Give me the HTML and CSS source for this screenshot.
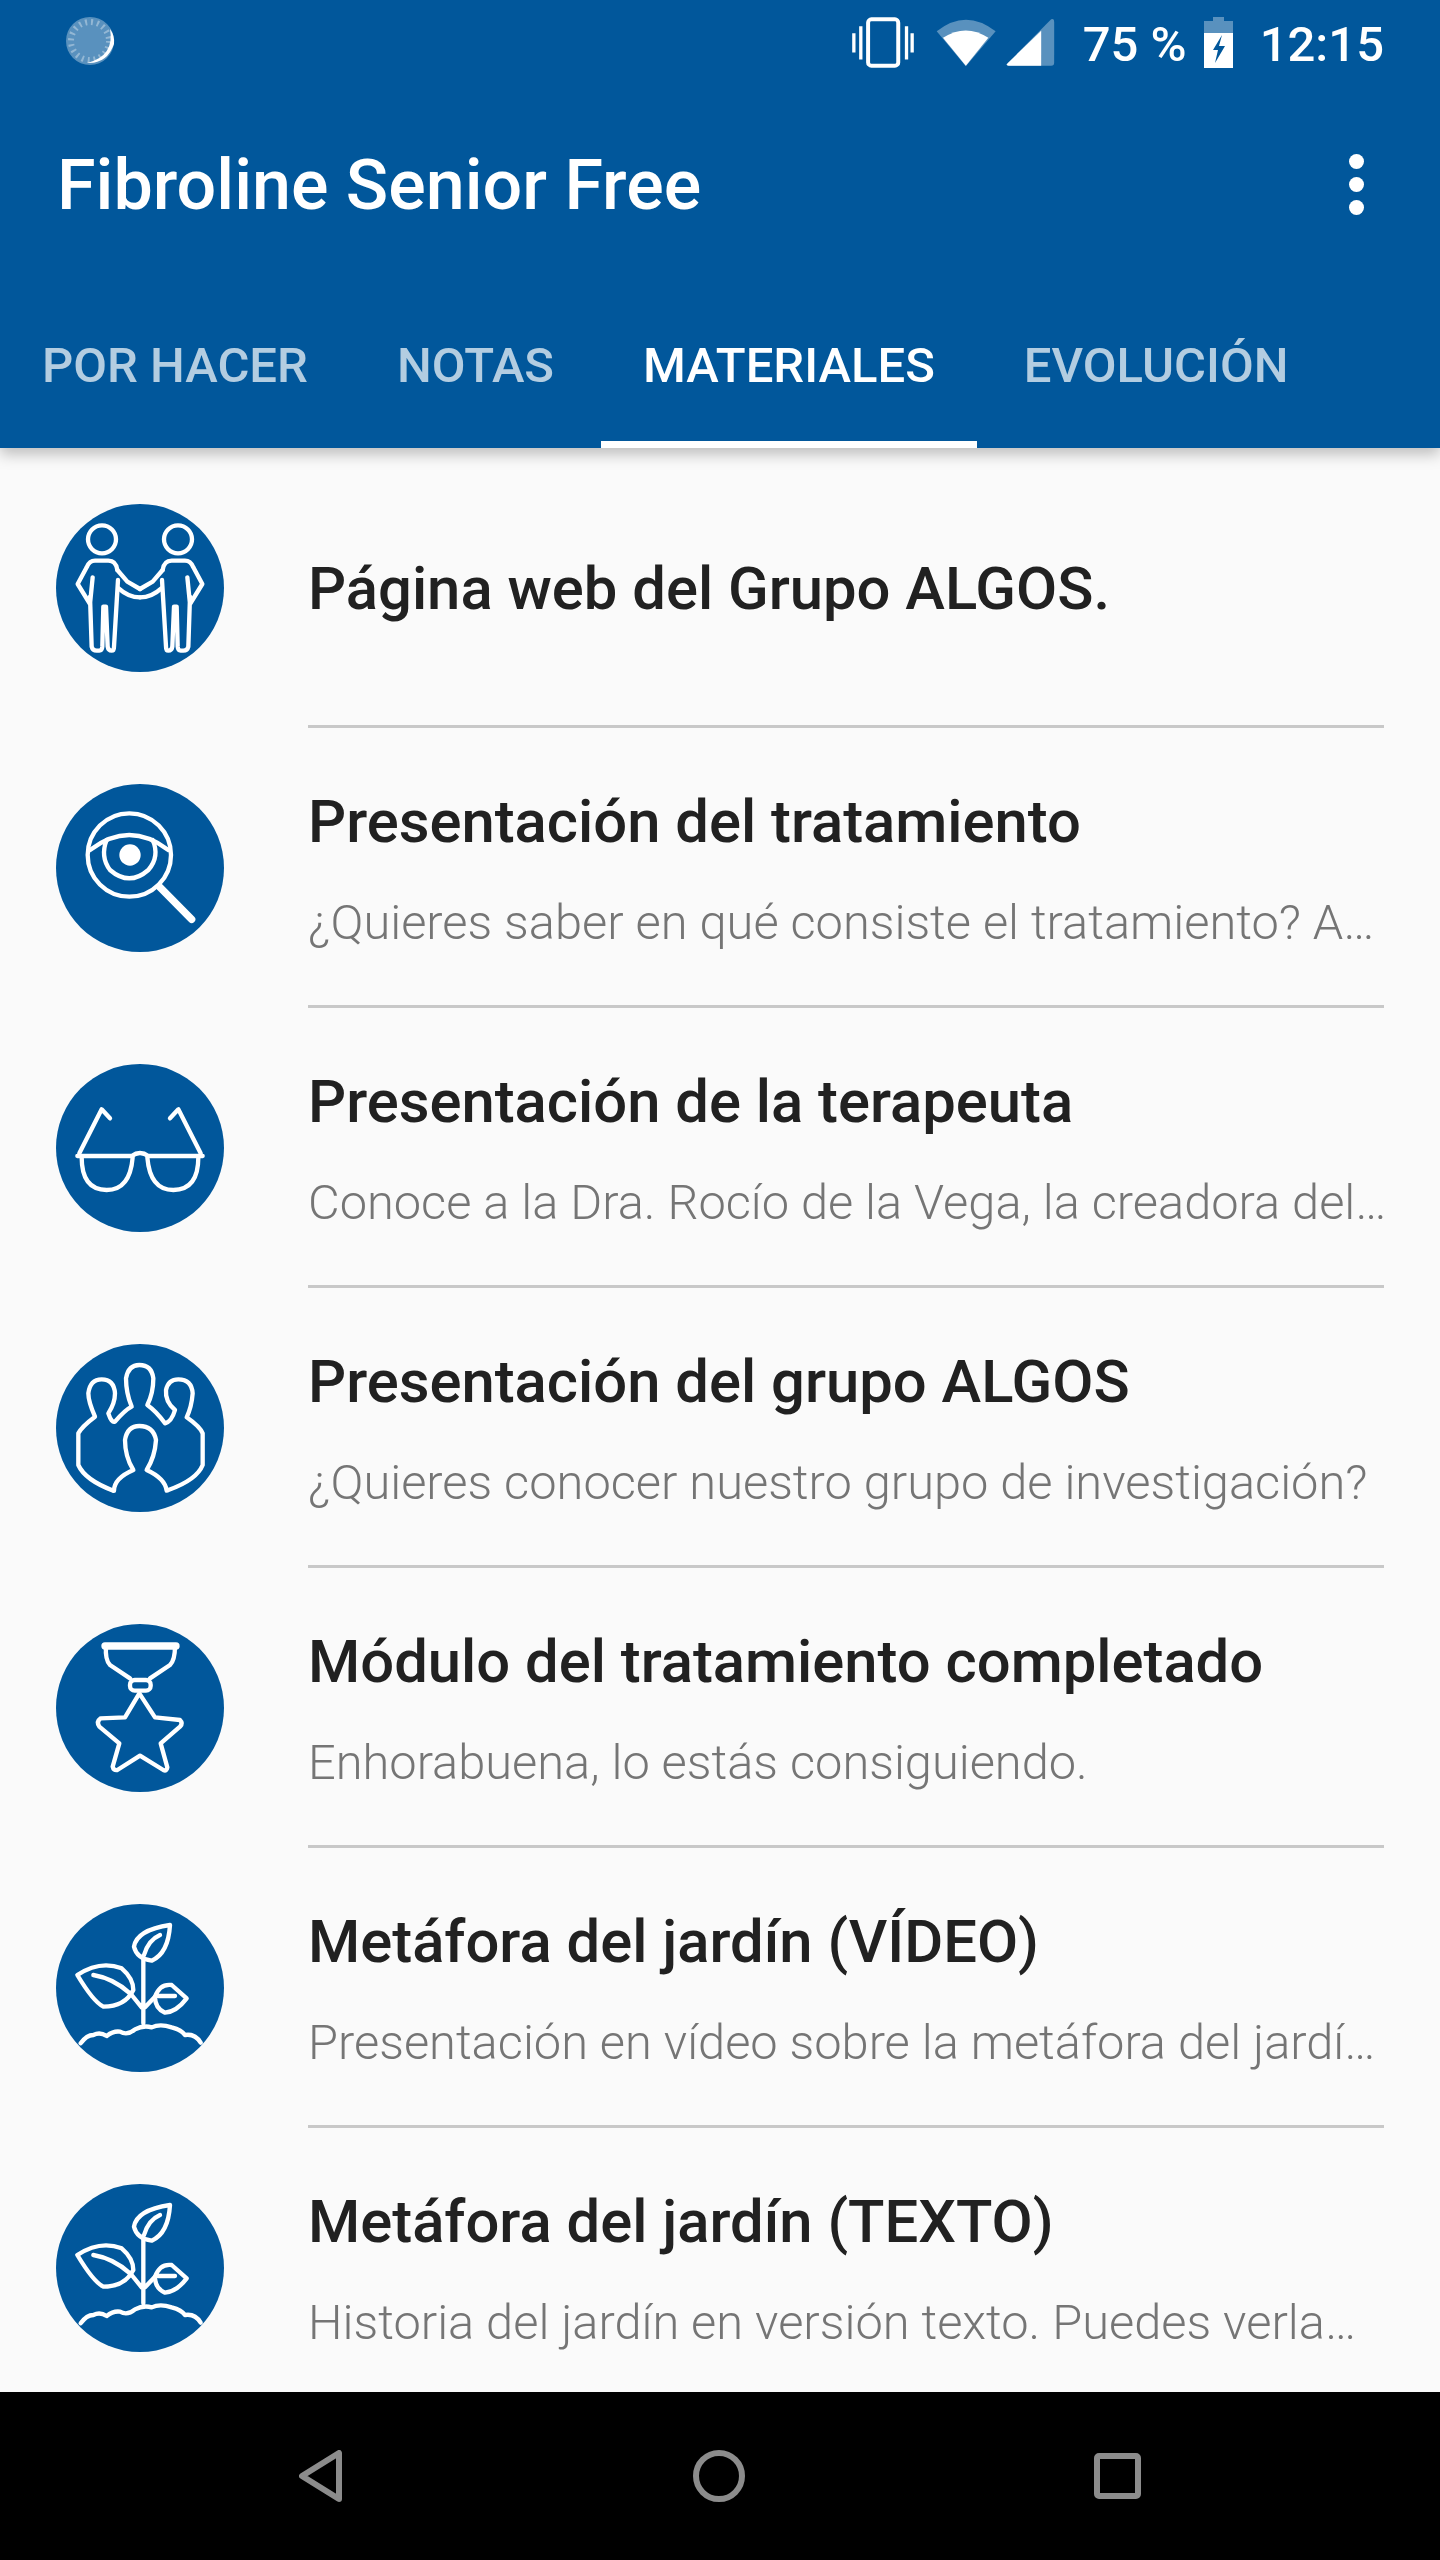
FILE: index.html
```html
<!DOCTYPE html>
<html lang="es">
<head>
    <meta charset="utf-8">
    <title>Fibroline Senior Free</title>
    <link rel="stylesheet" href="styles.css">
</head>
<body>
    <svg class="defs" width="0" height="0">
        <symbol id="plant" viewBox="48 42 504 504">
            <path d="M310 205V400M275 315L305 352M345 320L315 352"/>
            <path d="M390 105Q385 190 335 212Q290 205 282 170Q290 120 390 105ZM312 195Q325 150 360 135"/>
            <path d="M112 255Q180 210 245 235Q280 265 280 300Q255 350 190 350Q160 335 112 255ZM160 255Q220 265 270 310"/>
            <path d="M345 320Q360 280 395 285L440 325Q410 365 375 368Q345 355 345 320ZM355 318H405"/>
            <path d="M122 460Q140 435 160 435Q180 425 200 438Q220 422 240 425Q262 438 285 418Q310 405 335 412Q360 400 395 412Q425 420 435 435Q465 430 482 458"/>
        </symbol>
    </svg>

    <div class="screen">
        <header class="app-header">
            <div class="status-bar">
                <svg class="status-spinner" viewBox="0 0 52 52">
                    <circle cx="25" cy="25" r="24" fill="#fff" opacity="0.35"/>
                    <circle cx="25" cy="25" r="19" fill="none" stroke="#fff" stroke-width="6" stroke-dasharray="2 4" opacity="0.35"/>
                    <path d="M45 13Q50 40 22 47Q42 48 49 28Q50 20 45 13Z" fill="#fff"/>
                </svg>
                <div class="status-right">
                    <svg class="status-vibrate" viewBox="95 45 195 160">
                        <rect x="146" y="55" width="91" height="140" rx="10" fill="none" stroke="#fff" stroke-width="12"/>
                        <path d="M124 76V176M262 76V176M103 97V155M279 97V155" stroke="#fff" stroke-width="10" fill="none"/>
                    </svg>
                    <svg class="status-wifi" viewBox="345 50 185 148">
                        <path d="M349 90Q437 20 527 90L437 196Z" fill="#fff" opacity="0.35"/>
                        <path d="M368 110Q437 65 505 110L437 194Z" fill="#fff"/>
                    </svg>
                    <svg class="status-signal" viewBox="555 58 146 144">
                        <path d="M558 195L690 62Q699 58 699 70V192Q699 201 690 201H562Q553 201 558 195Z" fill="#fff" opacity="0.35"/>
                        <path d="M558 195L660 96V201H562Q553 201 558 195Z" fill="#fff"/>
                    </svg>
                    <span class="status-text status-battery-text">75 %</span>
                    <svg class="status-battery" viewBox="0 0 29 51">
                        <path d="M9 0H20V4H29V16H0V4H9Z" fill="#fff" opacity="0.35"/>
                        <path d="M0 16H29V51H0Z" fill="#fff"/>
                        <path d="M18 18L9 33H14L11 46L21 29H15Z" fill="#01579b"/>
                    </svg>
                    <span class="status-text">12:15</span>
                </div>
            </div>

            <div class="toolbar">
                <h1 class="app-title">Fibroline Senior Free</h1>
                <div class="menu-dots"><span></span><span></span><span></span></div>
            </div>

            <nav class="tabs">
                <a class="tab">POR HACER</a>
                <a class="tab">NOTAS</a>
                <a class="tab active">MATERIALES</a>
                <a class="tab">EVOLUCIÓN</a>
            </nav>
        </header>

        <main class="list">
            <div class="row">
                <svg class="row-icon" viewBox="48 42 504 504">
                    <circle class="disc" cx="300" cy="294" r="252"/>
                    <g id="person">
                        <circle cx="186" cy="148" r="42"/>
                        <path d="M232 240Q228 212 205 212H165Q148 212 140 232L113 282L150 342L158 262M150 320L155 470Q158 482 170 482H178Q186 482 187 470L190 350H198L203 470Q205 482 215 482Q222 482 222 470L234 270"/>
                        <path d="M232 240L262 275L300 297M236 295Q265 322 300 322"/>
                    </g>
                    <use href="#person" transform="matrix(-1 0 0 1 600 0)"/>
                </svg>
                <div class="row-body">
                    <div class="row-title">Página web del Grupo ALGOS.</div>
                </div>
            </div>

            <div class="row">
                <svg class="row-icon" viewBox="48 42 504 504">
                    <circle class="disc" cx="300" cy="294" r="252"/>
                    <circle cx="268" cy="255" r="125"/>
                    <path d="M150 240Q268 150 385 240"/>
                    <path d="M200 210Q180 260 210 300Q268 350 325 300Q360 260 338 210"/>
                    <circle class="solid" cx="270" cy="255" r="32"/>
                    <path class="thick" d="M358 350L455 448"/>
                </svg>
                <div class="row-body">
                    <div class="row-title">Presentación del tratamiento</div>
                    <div class="row-sub">¿Quieres saber en qué consiste el tratamiento? A…</div>
                </div>
            </div>

            <div class="row">
                <svg class="row-icon" viewBox="48 42 504 504">
                    <circle class="disc" cx="300" cy="294" r="252"/>
                    <path d="M112 318H275Q300 300 325 318H488"/>
                    <path d="M118 310L185 178L210 205M482 310L415 178L390 205"/>
                    <path d="M125 322Q125 420 200 420Q270 420 278 322M475 322Q475 420 400 420Q330 420 322 322"/>
                </svg>
                <div class="row-body">
                    <div class="row-title">Presentación de la terapeuta</div>
                    <div class="row-sub">Conoce a la Dra. Rocío de la Vega, la creadora del…</div>
                </div>
            </div>

            <div class="row">
                <svg class="row-icon" viewBox="48 42 504 504">
                    <circle class="disc" cx="300" cy="294" r="252"/>
                    <path d="M220 482Q135 450 115 405V310Q125 290 165 260Q145 215 145 190Q150 148 185 148Q222 148 225 190Q225 220 205 250Q215 280 225 275Q255 240 275 230Q258 190 258 145Q265 105 298 105Q335 105 340 145Q340 190 322 225Q350 245 375 280Q395 275 405 240Q375 215 378 180Q385 148 415 148Q455 148 458 190Q455 230 440 262Q480 290 488 310V405Q470 450 385 480"/>
                    <path d="M222 482Q222 445 280 420Q255 380 255 330Q262 288 298 288Q340 288 348 330Q345 380 320 420Q375 445 380 482"/>
                </svg>
                <div class="row-body">
                    <div class="row-title">Presentación del grupo ALGOS</div>
                    <div class="row-sub">¿Quieres conocer nuestro grupo de investigación?</div>
                </div>
            </div>

            <div class="row">
                <svg class="row-icon" viewBox="48 42 504 504">
                    <circle class="disc" cx="300" cy="294" r="252"/>
                    <path d="M198 108Q195 150 210 165L270 205M405 108Q405 150 390 165L330 205"/>
                    <path class="thick" d="M195 108H408"/>
                    <rect x="270" y="210" width="62" height="32" rx="14"/>
                    <path d="M298 250L345 322L420 330Q430 340 420 350L362 400L382 472Q380 485 370 480L300 437L232 480Q220 482 218 470L238 400L178 350Q168 335 182 325L255 322Z"/>
                </svg>
                <div class="row-body">
                    <div class="row-title">Módulo del tratamiento completado</div>
                    <div class="row-sub">Enhorabuena, lo estás consiguiendo.</div>
                </div>
            </div>

            <div class="row">
                <svg class="row-icon" viewBox="48 42 504 504">
                    <circle class="disc" cx="300" cy="294" r="252"/>
                    <use href="#plant" x="48" y="42" width="504" height="504"/>
                </svg>
                <div class="row-body">
                    <div class="row-title">Metáfora del jardín (VÍDEO)</div>
                    <div class="row-sub">Presentación en vídeo sobre la metáfora del jardí…</div>
                </div>
            </div>

            <div class="row">
                <svg class="row-icon" viewBox="48 42 504 504">
                    <circle class="disc" cx="300" cy="294" r="252"/>
                    <use href="#plant" x="48" y="42" width="504" height="504"/>
                </svg>
                <div class="row-body">
                    <div class="row-title">Metáfora del jardín (TEXTO)</div>
                    <div class="row-sub">Historia del jardín en versión texto. Puedes verla…</div>
                </div>
            </div>
        </main>

        <footer class="nav-bar">
            <svg class="nav-back" viewBox="0 0 44 52">
                <path d="M40 3V49L3 26Z"/>
            </svg>
            <svg class="nav-home" viewBox="0 0 52 52">
                <circle cx="26" cy="26" r="23"/>
            </svg>
            <svg class="nav-recent" viewBox="0 0 47 46">
                <rect x="3" y="3" width="41" height="40" rx="2"/>
            </svg>
        </footer>
    </div>
</body>
</html>
```

FILE: styles.css
```css
* {
    margin: 0;
    padding: 0;
    box-sizing: border-box;
}

body {
    background: #fafafa;
    font-family: Roboto, "Noto Sans", sans-serif;
    overflow: hidden;
}

.defs {
    position: absolute;
}

.screen {
    width: 1440px;
    height: 2560px;
    display: flex;
    flex-direction: column;
}

/* Header */

.app-header {
    height: 448px;
    flex: none;
    background: #01579b;
    color: #fff;
    position: relative;
    z-index: 1;
    box-shadow: 0 6px 14px rgba(0, 0, 0, 0.25);
}

.status-bar {
    height: 84px;
    display: flex;
    justify-content: space-between;
    align-items: center;
    padding: 0 56px 0 65px;
}

.status-spinner {
    width: 52px;
    height: 52px;
}

.status-right {
    display: flex;
    align-items: center;
}

.status-text {
    font-size: 49px;
    font-weight: 500;
    padding-top: 5px;
}

.status-vibrate {
    width: 65px;
    height: 53px;
    margin-right: 19px;
}

.status-wifi {
    width: 62px;
    height: 49px;
    margin-right: 9px;
}

.status-signal {
    width: 49px;
    height: 48px;
    margin-right: 28px;
}

.status-battery-text {
    margin-right: 17px;
}

.status-battery {
    width: 29px;
    height: 51px;
    margin-right: 27px;
}

.toolbar {
    height: 196px;
    display: flex;
    justify-content: space-between;
    align-items: center;
    padding: 5px 76px 0 57px;
}

.app-title {
    font-size: 70px;
    font-weight: 500;
}

.menu-dots {
    display: flex;
    flex-direction: column;
    gap: 8px;
}

.menu-dots span {
    width: 15px;
    height: 15px;
    border-radius: 50%;
    background: #fff;
}

.tabs {
    height: 168px;
    display: flex;
    gap: 5px;
}

.tab {
    display: flex;
    align-items: center;
    padding: 3px 42px 0;
    font-size: 49px;
    font-weight: 500;
    color: rgba(255, 255, 255, 0.7);
}

.tab.active {
    color: #fff;
    border-bottom: 7px solid #fff;
    padding-top: 10px;
}

/* List */

.list {
    flex: 1;
    overflow: hidden;
}

.row {
    height: 280px;
    display: flex;
    padding-left: 56px;
}

.row-icon {
    width: 168px;
    height: 168px;
    margin-top: 56px;
    flex: none;
    fill: none;
    stroke: #fff;
    stroke-width: 13;
    stroke-linecap: round;
    stroke-linejoin: round;
}

.row-icon .disc {
    fill: #01579b;
    stroke: none;
}

.row-icon .solid {
    fill: #fff;
    stroke: none;
}

.row-icon .thick {
    stroke-width: 22;
}

.row-body {
    flex: none;
    width: 1076px;
    height: 280px;
    margin-left: 84px;
    padding-top: 4px;
    border-bottom: 3px solid #c8c8c8;
    display: flex;
    flex-direction: column;
    justify-content: center;
    white-space: nowrap;
}

.row-title {
    font-size: 59.75px;
    font-weight: 500;
    color: #212121;
}

.row-sub {
    font-size: 48.75px;
    font-weight: 300;
    color: #757575;
    margin-top: 37px;
}

/* Navigation bar */

.nav-bar {
    height: 168px;
    flex: none;
    background: #000;
    display: flex;
    justify-content: space-between;
    align-items: center;
    padding: 0 299px;
    position: relative;
}

.nav-bar svg {
    fill: none;
    stroke: #8c8c8c;
    stroke-width: 6;
    stroke-linejoin: round;
}

.nav-back {
    width: 44px;
    height: 52px;
}

.nav-home {
    width: 52px;
    height: 52px;
}

.nav-recent {
    width: 47px;
    height: 46px;
}
```
